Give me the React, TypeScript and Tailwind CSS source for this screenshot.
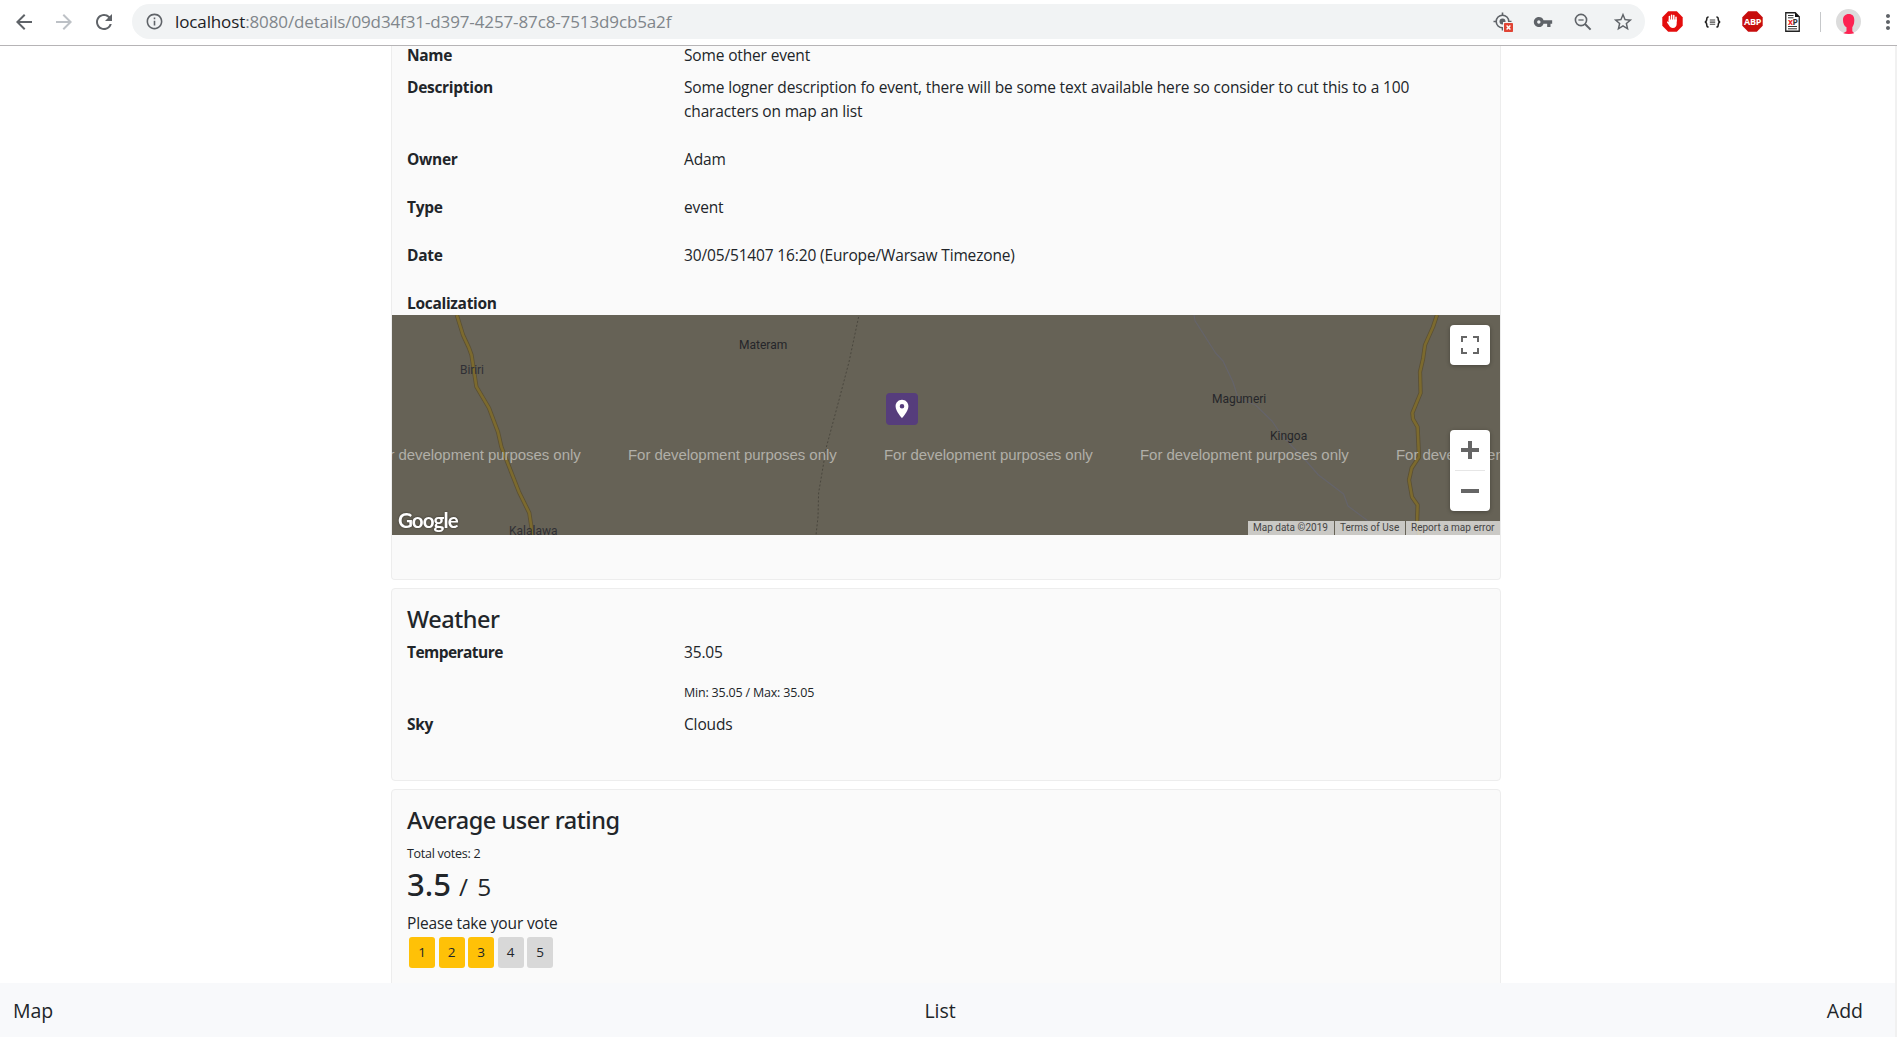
import type { ReactNode } from "react";
import {
  MdArrowBack,
  MdArrowForward,
  MdInfoOutline,
  MdLocationOn,
  MdMoreVert,
  MdRefresh,
  MdStarBorder,
  MdVpnKey,
} from "react-icons/md";

function Cell({ children }: { children: ReactNode }) {
  return <div className="flex h-full w-10 shrink-0 items-center justify-center">{children}</div>;
}

function BlockedLocationIcon() {
  return (
    <svg width="20" height="20" viewBox="0 0 20 20" className="overflow-visible">
      <circle cx="9.5" cy="9.5" r="6.3" fill="none" stroke="#5f6368" strokeWidth="1.6" />
      <circle cx="9.5" cy="9.5" r="3" fill="#5f6368" />
      <path d="M9.5 0.5v3M9.5 15.5v3M0.5 9.5h3M15.5 9.5h3" stroke="#5f6368" strokeWidth="1.6" />
      <rect x="10" y="10" width="10" height="10" fill="#f1f3f4" />
      <rect x="11" y="11" width="9" height="9" rx="0.8" fill="#e04434" />
      <path d="M13.6 13.6l3.8 3.8M17.4 13.6l-3.8 3.8" stroke="#fff" strokeWidth="1.4" />
    </svg>
  );
}

function ZoomOutIcon() {
  return (
    <svg width="18" height="18" viewBox="0 0 18 18" fill="none" stroke="#5f6368">
      <circle cx="7" cy="7" r="5.6" strokeWidth="1.6" />
      <path d="M4.4 7h5.2" strokeWidth="1.3" />
      <path d="M11 11l5.6 5.6" strokeWidth="2" />
    </svg>
  );
}

function HandStopIcon() {
  return (
    <svg width="21" height="21" viewBox="0 0 21 21">
      <path d="M6.2 0.3h8.6l5.9 5.9v8.6l-5.9 5.9H6.2L0.3 14.8V6.2z" fill="#e40d0d" />
      <path
        d="M7.4 10V5.6M9.6 9.5V4.3M11.8 9.5V4.6M14 10V6.2"
        stroke="#fff"
        strokeWidth="1.5"
        strokeLinecap="round"
      />
      <path d="M6.7 8.6h8v4.2c0 2.6-1.4 4.2-3.8 4.2-2 0-3-.8-3.8-2.4L5 11.5c-.4-.9.7-1.4 1.3-.7l.4.5z" fill="#fff" />
    </svg>
  );
}

function AbpIcon() {
  return (
    <div className="relative flex h-[21px] w-[21px] items-center justify-center">
      <svg width="21" height="21" viewBox="0 0 21 21" className="absolute inset-0">
        <path d="M6.2 0.3h8.6l5.9 5.9v8.6l-5.9 5.9H6.2L0.3 14.8V6.2z" fill="#c70d0d" />
      </svg>
      <span className="relative font-['Open_Sans'] text-[9px] leading-none font-bold tracking-[-0.3px] text-white">ABP</span>
    </div>
  );
}

function XPathIcon() {
  return (
    <div className="relative h-5 w-[15px]">
      <svg width="15" height="20" viewBox="0 0 15 20" className="absolute inset-0">
        <path d="M0.75 0.75h9.5l4 4v14.5H0.75z" fill="#fff" stroke="#222" strokeWidth="1.3" />
        <path d="M10 0.5v4.6h4.6z" fill="#111" />
        <path d="M3 3.5h5.5M3 5.8h5.5M3 14.5h9M3 16.8h9" stroke="#333" strokeWidth="1" />
      </svg>
      <span className="absolute top-[5px] left-[3px] font-['Open_Sans'] text-[8.5px] leading-[10px] font-bold tracking-[-0.4px] text-[#333]">
        <span className="text-[#e22]">x</span>P
      </span>
    </div>
  );
}

function BracesIcon() {
  return (
    <svg width="17" height="12" viewBox="0 0 17 12" fill="none" stroke="#222">
      <path
        d="M4.6 1C3 1 2.8 1.6 2.8 2.8S2.6 5.6 0.9 6c1.7.4 1.9 1.9 1.9 3.2S3 11 4.6 11M12.4 1c1.6 0 1.8.6 1.8 1.8s.2 2.8 1.9 3.2c-1.7.4-1.9 1.9-1.9 3.2S14 11 12.4 11"
        strokeWidth="1.5"
      />
      <path d="M5.8 4h5.4M5.8 6.1h5.4M5.8 8.2h5.4" strokeWidth="1.1" stroke="#444" />
    </svg>
  );
}

function Avatar() {
  return (
    <svg width="25" height="25" viewBox="0 0 25 25" className="overflow-visible">
      <circle cx="12.5" cy="12.5" r="12.5" fill="#dcdcdc" />
      <path
        d="M12.8 5C16.500 5 18.300 7.300 18.300 11c0 3.300-.7 5.500-2 7.300v4l1.900 1.900c-3 1-7.800 1-10.900 0l3.200-2v-4c-2.200-1-3.500-3.600-3.500-7.200C7 7.500 9.200 5 12.800 5z"
        fill="#fd2352"
      />
    </svg>
  );
}

function BrowserBar() {
  return (
    <header className="h-[46px] shrink-0 border-b border-[#b6b4b6] bg-white text-[#5f6368]">
      <div className="flex h-[43px] items-center overflow-hidden pl-[4px]">
        <Cell><MdArrowBack size={24} /></Cell>
        <Cell><MdArrowForward size={24} className="text-[#bdc1c6]" /></Cell>
        <Cell><MdRefresh size={24} /></Cell>
        <div className="ml-2 flex h-[35px] w-[1513px] shrink-0 items-center rounded-full bg-[#f1f3f4] pr-[2.5px] pl-[13px]">
          <MdInfoOutline size={19} />
          <span className="ml-[11px] flex-1 font-['Open_Sans'] text-[17px] leading-6 tracking-[-0.12px] whitespace-nowrap text-[#80868b]">
            <span className="text-[#202124]">localhost</span>:8080/details/09d34f31-d397-4257-87c8-7513d9cb5a2f
          </span>
          <Cell><BlockedLocationIcon /></Cell>
          <Cell><MdVpnKey size={20} /></Cell>
          <Cell><ZoomOutIcon /></Cell>
          <Cell><MdStarBorder size={22} /></Cell>
        </div>
        <div className="ml-[7.5px] flex h-full shrink-0 items-center">
          <Cell><HandStopIcon /></Cell>
          <Cell><BracesIcon /></Cell>
          <Cell><AbpIcon /></Cell>
          <Cell><XPathIcon /></Cell>
        </div>
        <div className="ml-[7px] h-5 w-px shrink-0 bg-[#c6c8ca]" />
        <div className="ml-[15px] shrink-0"><Avatar /></div>
        <MdMoreVert size={24} className="ml-[15px] shrink-0" />
      </div>
    </header>
  );
}

function Row({ label, tight, children }: { label: string; tight?: boolean; children?: ReactNode }) {
  return (
    <div className="flex pl-[15px]">
      <div className={tight ? "w-[277px] font-bold tracking-[-0.55px]" : "w-[277px] font-bold tracking-[-0.3px]"}>{label}</div>
      <div className="w-[740px] tracking-[-0.15px]">{children}</div>
    </div>
  );
}

const ROAD_WEST =
  "M64.800 0L71 20 77 33 79.500 40 84.400 71.700 97 93 106 117 109.400 132 127 177 137.300 198 139.400 212 140 220";
const ROAD_EAST =
  "M1045 0L1041 12 1033 30 1031 44 1028 57 1028.600 78 1020.400 98 1021 104 1025.600 112 1027 142 1019.700 153 1017 165 1020 182 1025.600 190 1025 208 1027 220";

function MapTiles() {
  return (
    <svg width="1108" height="220" viewBox="0 0 1108 220" fill="none" strokeLinejoin="round" className="absolute inset-0">
      <path d={ROAD_WEST} stroke="#5b5034" strokeWidth="4.200" />
      <path d={ROAD_WEST} stroke="#7c6a2e" strokeWidth="2.600" />
      <path d={ROAD_EAST} stroke="#5b5034" strokeWidth="4.200" />
      <path d={ROAD_EAST} stroke="#7c6a2e" strokeWidth="2.600" />
      <path
        d="M466.600 2L457 47 447 85 434.400 132 426.600 178 426 202 424 220"
        stroke="#4a473e"
        strokeWidth="1"
        strokeDasharray="2 2"
      />
      <path
        d="M802 0L803 5.700 823.600 38 831 46 841 67 846 83 863.600 90 880 106 889.500 120 915 147 926.500 160 951.600 179 956 191 976 206"
        stroke="#65646a"
        strokeWidth="1.200"
      />
    </svg>
  );
}

function EventMap() {
  return (
    <div className="relative h-[220px] overflow-hidden bg-[#666256] whitespace-nowrap">
      <MapTiles />
      <div className="font-['Roboto'] text-[12px] leading-[14px] text-[#25262a]">
        <span className="absolute top-[23px] left-[347px]">Materam</span>
        <span className="absolute top-[48px] left-[68px] tracking-[-0.1px] text-[#303035]">Biriri</span>
        <span className="absolute top-[209px] left-[117px] text-[#303035]">Kalalawa</span>
        <span className="absolute top-[77px] left-[820px]">Magumeri</span>
        <span className="absolute top-[114px] left-[878px]">Kingoa</span>
      </div>
      <div className="absolute top-[131px] left-[-20px] flex font-['Liberation_Sans'] text-[15px] leading-[18px] tracking-[-0.05px] text-[#b1afa8]">
        <span className="w-64 shrink-0">For development purposes only</span>
        <span className="w-64 shrink-0">For development purposes only</span>
        <span className="w-64 shrink-0">For development purposes only</span>
        <span className="w-64 shrink-0">For development purposes only</span>
        <span className="w-64 shrink-0">For development purposes only</span>
      </div>
      <div className="absolute top-[78px] left-[494px] flex h-8 w-8 items-center justify-center rounded bg-[#563d7c] text-white">
        <MdLocationOn size={22} />
      </div>
      <span className="absolute top-[193px] left-[6px] font-['Lato'] text-[20.5px] leading-[24px] font-bold tracking-[-0.9px] text-white drop-shadow-[0_0_1px_rgba(0,0,0,0.5)]">
        Google
      </span>
      <div className="absolute top-[10px] right-[10px] flex h-10 w-10 items-center justify-center rounded-sm bg-white shadow-[0_1px_4px_rgba(0,0,0,0.3)]">
        <svg width="18" height="18" viewBox="0 0 18 18" fill="none" stroke="#666" strokeWidth="2">
          <path d="M1 6V1h5M12 1h5v5M17 12v5h-5M6 17H1v-5" />
        </svg>
      </div>
      <div className="absolute top-[115px] right-[10px] flex h-[81px] w-10 flex-col items-center rounded-sm bg-white shadow-[0_1px_4px_rgba(0,0,0,0.3)]">
        <div className="flex h-10 items-center">
          <svg width="18" height="18" viewBox="0 0 18 18" stroke="#666" strokeWidth="4">
            <path d="M9 0v18M0 9h18" />
          </svg>
        </div>
        <div className="h-px w-[30px] bg-[#e6e6e6]" />
        <div className="flex h-10 items-center">
          <div className="h-1 w-[18px] bg-[#666]" />
        </div>
      </div>
      <div className="absolute right-0 bottom-0 flex h-[14px] gap-px font-['Roboto'] text-[10px] leading-[14px] text-[#444]">
        <span className="w-[86px] bg-[#f5f5f5]/70 pl-[5px]">Map data ©2019</span>
        <span className="w-[70px] bg-[#f5f5f5]/70 pl-[5px]">Terms of Use</span>
        <span className="w-[94px] bg-[#f5f5f5]/70 pl-[5px]">Report a map error</span>
      </div>
    </div>
  );
}

function CardTitle({ children }: { children: ReactNode }) {
  return (
    <h2 className="pl-[15px] font-['Noto_Sans'] text-[23.5px] leading-7 font-medium tracking-[-0.48px]">{children}</h2>
  );
}

function VoteButton({ value, active }: { value: number; active: boolean }) {
  return (
    <button
      className={
        active
          ? "h-[31px] w-[26px] rounded-[3px] bg-[#ffc107] text-[13.5px] leading-[31px]"
          : "h-[31px] w-[26px] rounded-[3px] bg-[#d8d8d8] text-[13.5px] leading-[31px]"
      }
    >
      {value}
    </button>
  );
}

function DetailsCard() {
  return (
    <section className="h-[534px] shrink-0 rounded-b border border-t-0 border-[#ededed] bg-[#fafafa] text-[15.5px]">
      <div className="leading-[18px]">
        <Row label="Name">Some other event</Row>
      </div>
      <div className="mt-[11px] flex flex-col gap-6 leading-6">
        <Row label="Description">
          Some logner description fo event, there will be some text available here so consider to cut this to a 100
          characters on map an list
        </Row>
        <Row label="Owner">Adam</Row>
        <Row label="Type">event</Row>
        <Row label="Date">30/05/51407 16:20 (Europe/Warsaw Timezone)</Row>
        <Row label="Localization" />
      </div>
      <EventMap />
    </section>
  );
}

function WeatherCard() {
  return (
    <section className="h-[193px] shrink-0 rounded border border-[#ededed] bg-[#fafafa] pt-4">
      <CardTitle>Weather</CardTitle>
      <div className="mt-[7px] text-[15.5px] leading-6">
        <Row label="Temperature" tight>
          <p>35.05</p>
          <p className="mt-[17px] mb-[7px] text-[12.5px] leading-6 tracking-[-0.2px]">Min: 35.05 / Max: 35.05</p>
        </Row>
        <Row label="Sky">Clouds</Row>
      </div>
    </section>
  );
}

function RatingCard() {
  return (
    <section className="h-[240px] shrink-0 rounded border border-[#ededed] bg-[#fafafa] pt-4">
      <CardTitle>Average user rating</CardTitle>
      <div className="mt-2 pl-[15px]">
        <p className="text-[12.5px] leading-6 tracking-[-0.27px]">Total votes: 2</p>
        <p className="h-[37px] text-[31px] leading-[37px]">
          <span className="font-['Noto_Sans'] font-medium">3.5</span>
          <span className="ml-[8px] text-[24.5px] [word-spacing:3px]">/ 5</span>
        </p>
        <p className="mt-2 text-[15.5px] leading-6 tracking-[-0.16px]">Please take your vote</p>
        <div className="mt-[2px] ml-[2px] flex gap-[3.5px]">
          {[1, 2, 3, 4, 5].map((n) => (
            <VoteButton key={n} value={n} active={n <= 3} />
          ))}
        </div>
      </div>
    </section>
  );
}

export default function App() {
  return (
    <div className="flex h-[1037px] w-[1897px] flex-col overflow-hidden bg-white font-['Open_Sans',sans-serif] text-[#212529]">
      <BrowserBar />
      <div className="flex min-h-0 flex-1">
        <div className="flex min-w-0 flex-1 flex-col">
          <main className="min-h-0 flex-1 overflow-hidden">
            <div className="ml-[391px] flex w-[1110px] flex-col gap-2">
              <DetailsCard />
              <WeatherCard />
              <RatingCard />
            </div>
          </main>
          <nav className="flex h-[54px] shrink-0 items-center justify-between bg-[#f8f9fb] pt-[2px] pr-[32px] pl-[13px] text-[19.5px]">
            <a>Map</a>
            <a>List</a>
            <a>Add</a>
          </nav>
        </div>
        <div className="w-[2px] bg-[#f1f1f1]" />
      </div>
    </div>
  );
}
